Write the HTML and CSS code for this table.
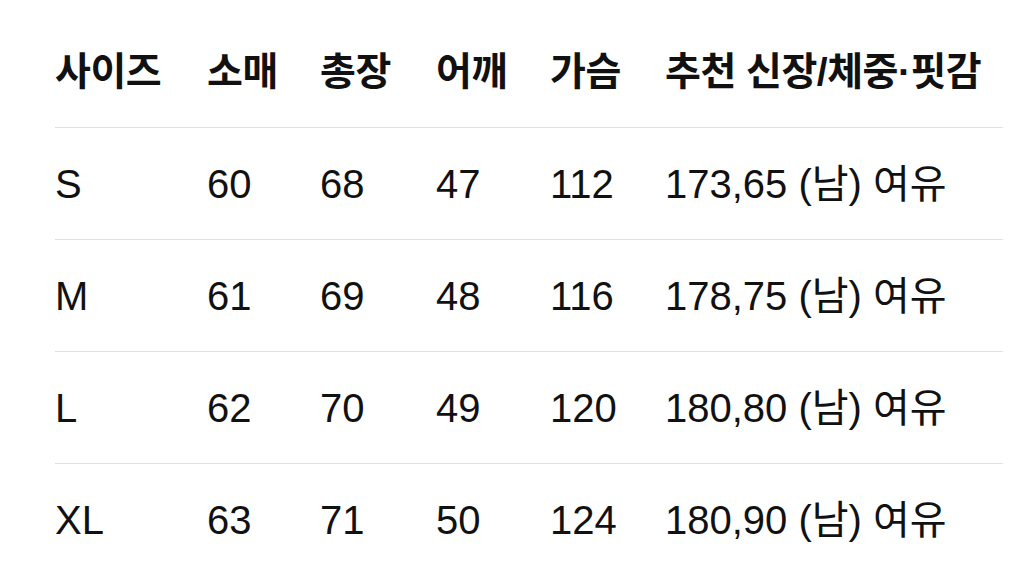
FILE: index.html
```html
<!DOCTYPE html>
<html lang="ko">
<head>
<meta charset="utf-8">
<title>사이즈</title>
<link rel="stylesheet" href="styles.css">
</head>
<body>
<div class="table">
  <div class="row head">
    <div class="cell">사이즈</div>
    <div class="cell">소매</div>
    <div class="cell">총장</div>
    <div class="cell">어깨</div>
    <div class="cell">가슴</div>
    <div class="cell">추천 신장/체중·핏감</div>
  </div>
  <div class="row">
    <div class="cell">S</div>
    <div class="cell">60</div>
    <div class="cell">68</div>
    <div class="cell">47</div>
    <div class="cell">112</div>
    <div class="cell">173,65 (남) 여유</div>
  </div>
  <div class="row">
    <div class="cell">M</div>
    <div class="cell">61</div>
    <div class="cell">69</div>
    <div class="cell">48</div>
    <div class="cell">116</div>
    <div class="cell">178,75 (남) 여유</div>
  </div>
  <div class="row">
    <div class="cell">L</div>
    <div class="cell">62</div>
    <div class="cell">70</div>
    <div class="cell">49</div>
    <div class="cell">120</div>
    <div class="cell">180,80 (남) 여유</div>
  </div>
  <div class="row last">
    <div class="cell">XL</div>
    <div class="cell">63</div>
    <div class="cell">71</div>
    <div class="cell">50</div>
    <div class="cell">124</div>
    <div class="cell">180,90 (남) 여유</div>
  </div>
</div>
</body>
</html>
```
FILE: styles.css
```css
html, body {
  margin: 0;
  padding: 0;
  background: #ffffff;
}
body {
  font-family: "Liberation Sans", "Noto Sans CJK KR", sans-serif;
  color: #111111;
  overflow: hidden;
}
.table {
  padding: 16px 21px 0 55px;
}
.row {
  display: grid;
  grid-template-columns: 152px 113px 116px 114px 115px 1fr;
  align-items: center;
  height: 111px;
  border-bottom: 1px solid #e2e2e2;
  font-size: 40px;
  line-height: 1;
}
.row.last {
  border-bottom: none;
}
.head {
  font-size: 39px;
  font-weight: 700;
  letter-spacing: -0.5px;
}
.cell {
  white-space: nowrap;
}
```
